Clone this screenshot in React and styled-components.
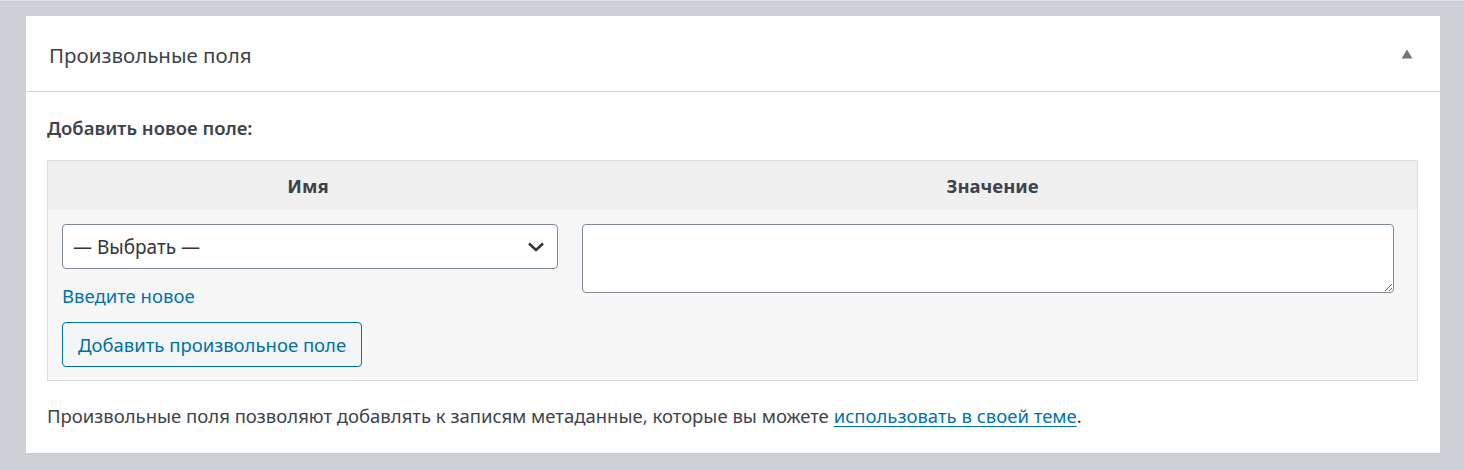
import styled, { createGlobalStyle } from 'styled-components';

const GlobalStyle = createGlobalStyle`
	html, body {
		margin: 0;
		padding: 0;
		background: #cdd0d4;
	}
	body {
		font-family: "Noto Sans", "Open Sans", sans-serif;
		color: #3c434a;
	}
	* {
		box-sizing: border-box;
	}
`;

const Page = styled.div`
	padding: 15px 24px 17px 26px;
	border-top: 1px solid #dfe1e3;
`;

const Panel = styled.section`
	background: #fff;
	height: 437px;
	display: flex;
	flex-direction: column;
`;

const Header = styled.div`
	height: 76px;
	flex-shrink: 0;
	display: flex;
	align-items: center;
	justify-content: space-between;
	padding: 0 27px 0 23px;
	border-bottom: 1px solid #d5d7da;
`;

const Title = styled.h2`
	margin: 0;
	font-size: 20.5px;
	font-weight: 400;
	color: #3c434a;
	padding-top: 2px;
`;

const Toggle = styled.button`
	border: 0;
	background: none;
	padding: 0;
	display: flex;
	cursor: pointer;
`;

const Body = styled.div`
	padding: 0 22px 0 21px;
`;

const Subtitle = styled.p`
	margin: 22px 0 18px;
	font-size: 18.5px;
	line-height: 28px;
	font-weight: 600;
	color: #3c434a;
`;

const Table = styled.div`
	border: 1px solid #dcdcde;
	display: grid;
	grid-template-columns: 520px 1fr;
`;

const HeadCell = styled.div`
	background: #f0f0f1;
	height: 49px;
	display: flex;
	align-items: center;
	justify-content: center;
	font-weight: 700;
	font-size: 18.5px;
	color: #3c434a;
`;

const Cell = styled.div`
	background: #f7f7f7;
	padding: ${(p) => (p.$right ? '14px 23px 13px 14px' : '14px 10px 13px 14px')};
	display: flex;
	flex-direction: column;
	align-items: flex-start;
`;

const SelectBox = styled.div`
	width: 100%;
	height: 45px;
	background: #fff;
	border: 1px solid #7e8993;
	border-radius: 4px;
	display: flex;
	align-items: center;
	padding: 0 12px 0 10px;
	font-size: 19px;
	color: #32373c;
	justify-content: space-between;
`;

const Link = styled.a`
	color: #0073aa;
	text-decoration: ${(p) => (p.$underline ? 'underline' : 'none')};
	text-underline-offset: 3px;
	cursor: pointer;
`;

const NewLink = styled(Link)`
	font-size: 18.5px;
	line-height: 24px;
	margin-top: 15px;
`;

const Button = styled.button`
	margin-top: 14px;
	height: 45px;
	padding: 0 15px;
	border: 1px solid #0071a1;
	border-radius: 4px;
	background: #f3f5f6;
	color: #0071a1;
	font-family: inherit;
	font-size: 18.5px;
	cursor: pointer;
`;

const TextArea = styled.textarea`
	width: 100%;
	height: 69px;
	border: 1px solid #7e8993;
	border-radius: 4px;
	background: #fff;
	font-family: inherit;
	font-size: 18px;
	display: block;
`;

const Note = styled.p`
	margin: 21px 0 0;
	font-size: 18.5px;
	line-height: 28px;
	color: #3c434a;
`;

const App = () => {
	return (
		<>
			<GlobalStyle />
			<Page>
				<Panel>
					<Header>
						<Title>Произвольные поля</Title>
						<Toggle aria-label="Свернуть">
							<svg width="12" height="10" viewBox="0 0 12 10">
								<polygon points="6,0.5 11.5,9.5 0.5,9.5" fill="#72777c" />
							</svg>
						</Toggle>
					</Header>
					<Body>
						<Subtitle>Добавить новое поле:</Subtitle>
						<Table>
							<HeadCell>Имя</HeadCell>
							<HeadCell>Значение</HeadCell>
							<Cell>
								<SelectBox>
									<span>— Выбрать —</span>
									<svg width="18" height="12" viewBox="0 0 18 12">
										<path d="M2 2.5 L9 9 L16 2.5" fill="none" stroke="#32373c" strokeWidth="2.6" />
									</svg>
								</SelectBox>
								<NewLink>Введите новое</NewLink>
								<Button>Добавить произвольное поле</Button>
							</Cell>
							<Cell $right>
								<TextArea />
							</Cell>
						</Table>
						<Note>
							Произвольные поля позволяют добавлять к записям метаданные, которые вы можете{' '}
							<Link $underline>использовать в своей теме</Link>.
						</Note>
					</Body>
				</Panel>
			</Page>
		</>
	);
};

export default App;
